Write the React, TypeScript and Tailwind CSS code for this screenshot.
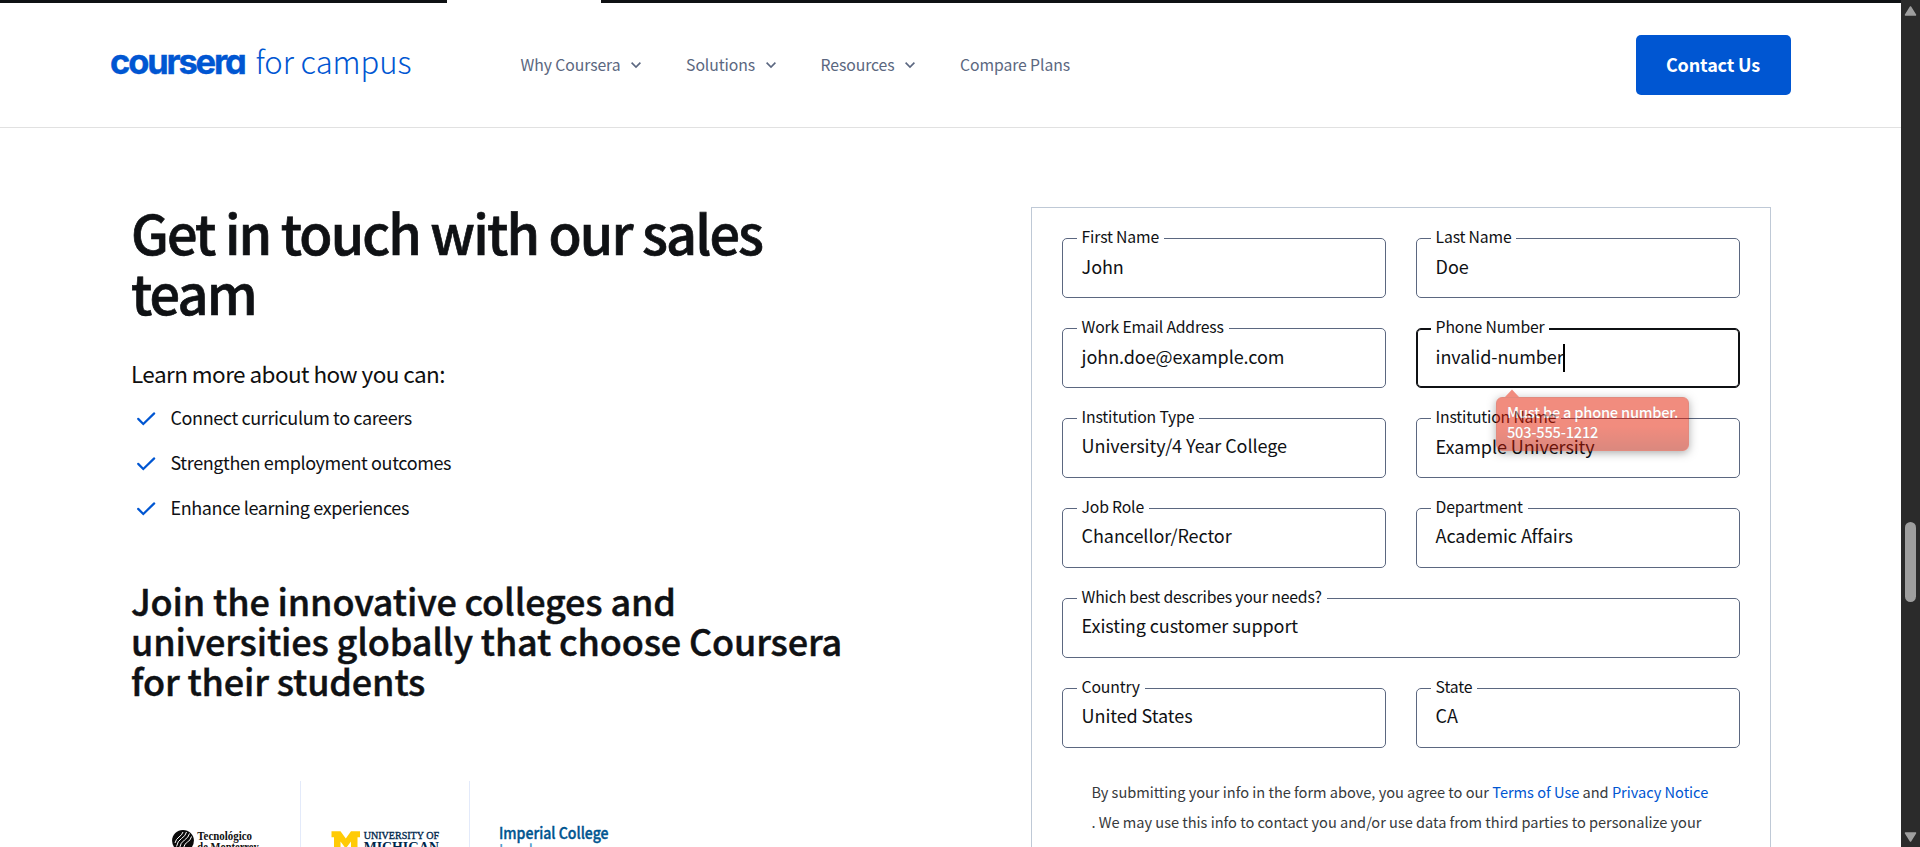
import type { ReactNode } from "react";

type NavItem = { label: string; width: string; menu: boolean };

const navItems: NavItem[] = [
  { label: "Why Coursera", width: "w-[165.5px]", menu: true },
  { label: "Solutions", width: "w-[134.5px]", menu: true },
  { label: "Resources", width: "w-[139.5px]", menu: true },
  { label: "Compare Plans", width: "w-[120px]", menu: false },
];

const benefits = [
  "Connect curriculum to careers",
  "Strengthen employment outcomes",
  "Enhance learning experiences",
];

function Chevron() {
  return (
    <svg className="ml-[9.5px] h-[10px] w-[12px]" viewBox="0 0 12 10" fill="none" stroke="#5b6780" strokeWidth="1.6">
      <path d="M1.6 2.6 L6 7 L10.4 2.6" />
    </svg>
  );
}

function Header() {
  return (
    <header className="flex h-[125px] items-center border-b border-[#e1e1e1] pr-[110px] pl-[110px]">
      <div className="flex w-[410.6px] items-baseline pb-[8px] leading-[40px] text-[#0056d2]">
        <span className="w-[145.5px] font-[Inter] text-[34.5px] font-bold tracking-[-2.15px] [font-feature-settings:'cv11'] [-webkit-text-stroke:0.4px_#0056d2]">
          coursera
        </span>
        <span className="text-[31px] font-light tracking-[-0.05px]">for campus</span>
      </div>
      <nav className="flex pb-px text-[15.75px] leading-[20px] tracking-[-0.09px] text-[#5b6780]">
        {navItems.map((item) => (
          <div key={item.label} className={`flex shrink-0 items-center whitespace-nowrap ${item.width}`}>
            {item.label}
            {item.menu && <Chevron />}
          </div>
        ))}
      </nav>
      <button className="ml-auto flex h-[60px] w-[155px] items-center justify-center rounded-[5px] bg-[#0056d2] pr-px pb-[2px] text-[18px] font-bold tracking-[-0.15px] text-white">
        Contact Us
      </button>
    </header>
  );
}

function Check() {
  return (
    <svg className="mt-[3px] mr-[14.5px] ml-[5px] h-[20px] w-[20px]" viewBox="0 0 20 20" fill="none" stroke="#0056d2" strokeWidth="2.2">
      <path d="M2.2 9.9 L7.3 15 L18.2 4.4" strokeLinecap="round" />
    </svg>
  );
}

function TecLogo() {
  return (
    <svg className="h-[66px] w-[169px]" viewBox="131 781 169 66">
      <circle cx="183" cy="840.8" r="10.900" fill="#0b0b0b" />
      <g fill="none" stroke="#ffffff" strokeWidth="1">
        <path d="M183 832 q-1 3 -4 5 t-4 6" />
        <path d="M186.500 832 q-1 4 -5 6.500 t-5 8" />
        <path d="M189.500 833.500 q-1 4 -5 6.500 t-5 8" />
        <path d="M191.500 836.500 q-1 4 -4 5.500 t-4 6" />
      </g>
      <g fontFamily="'Liberation Serif', serif" fontWeight="700" fontSize="11.5" fill="#111111">
        <text x="197.3" y="840" textLength="54.7" lengthAdjust="spacingAndGlyphs">Tecnológico</text>
        <text x="197.3" y="851" textLength="61.5" lengthAdjust="spacingAndGlyphs">de Monterrey</text>
      </g>
    </svg>
  );
}

function MichiganLogo() {
  return (
    <svg className="h-[66px] w-[168px]" viewBox="301 781 168 66">
      <path
        d="M331.500 831.300 H340.500 L345.800 838.500 L351 831.300 H360 V837.300 H357.500 V849 H351 V841.500 L345.800 848.500 L340.500 841.500 V849 H334 V837.300 H331.500 Z"
        fill="#ffcb05"
      />
      <g fontFamily="'Liberation Serif', serif" fill="#00274c">
        <text x="363.7" y="838.5" fontSize="10.500" fontWeight="400" stroke="#00274c" strokeWidth="0.35" textLength="75.3" lengthAdjust="spacingAndGlyphs">
          UNIVERSITY OF
        </text>
        <text x="363.7" y="852" fontSize="15.500" fontWeight="700" textLength="75.3" lengthAdjust="spacingAndGlyphs">
          MICHIGAN
        </text>
      </g>
    </svg>
  );
}

function ImperialLogo() {
  return (
    <svg className="h-[66px] w-[167px]" viewBox="470 781 167 66">
      <g fontFamily="'Noto Sans CJK SC', sans-serif" fontWeight="500" fontSize="16">
        <text x="499" y="839.3" textLength="109.500" lengthAdjust="spacingAndGlyphs" fill="#005590" stroke="#005590" strokeWidth="0.4">
          Imperial College
        </text>
        <text x="499" y="856" textLength="51" lengthAdjust="spacingAndGlyphs" fill="#4f9bc9">
          London
        </text>
      </g>
    </svg>
  );
}

function Pitch() {
  return (
    <section className="w-[900px] pt-[74px] pl-[131px] text-[#0f1114]">
      <h1 className="w-[720px] text-[54px] leading-[60px] font-medium tracking-[-1.86px] [-webkit-text-stroke:0.7px_#0f1114]">
        Get in touch with our sales
        <br />
        team
      </h1>
      <p className="mt-[36px] text-[22.5px] leading-[30px] tracking-[-0.56px] text-[#0f0f0f]">
        Learn more about how you can:
      </p>
      <ul className="mt-[14px] flex flex-col gap-[15px] text-[18px] leading-[30px] tracking-[-0.39px]">
        {benefits.map((benefit) => (
          <li key={benefit} className="flex items-center">
            <Check />
            {benefit}
          </li>
        ))}
      </ul>
      <h2 className="mt-[58px] text-[36px] leading-[40px] font-medium tracking-[-0.15px] whitespace-nowrap [-webkit-text-stroke:0.45px_#0f1114]">
        Join the innovative colleges and
        <br />
        universities globally that choose Coursera
        <br />
        for their students
      </h2>
      <div className="mt-[81px] flex">
        <div className="border-r border-[#e3eafa]">
          <TecLogo />
        </div>
        <div className="border-r border-[#e3eafa]">
          <MichiganLogo />
        </div>
        <ImperialLogo />
      </div>
    </section>
  );
}

type FieldProps = {
  label: string;
  value: string;
  select?: boolean;
  focused?: boolean;
  wide?: boolean;
  children?: ReactNode;
};

function Field({ label, value, select, focused, wide, children }: FieldProps) {
  const frame = focused ? "border-[#0f1114] ring-1 ring-inset ring-[#0f1114]" : "border-[#5b6780]";
  return (
    <div
      className={`relative h-[60px] rounded-[5px] border pl-[18.6px] text-[#0f1114] ${frame} ${select ? "pt-[14px]" : "pt-[15px]"} ${wide ? "col-span-2" : ""}`}
    >
      <label className="absolute top-[-12px] left-[14px] bg-white pr-[5px] pl-[4.6px] text-[15.75px] leading-[20px] tracking-[-0.18px] whitespace-nowrap">
        {label}
      </label>
      <div className="text-[18px] leading-[24px] tracking-[-0.08px] whitespace-nowrap">{value}</div>
      {children}
    </div>
  );
}

function PhoneError() {
  return (
    <div className="absolute top-[60px] left-[79px] z-10 w-[193px] opacity-50">
      <svg className="ml-[8px] block h-[8px] w-[16px]" viewBox="0 0 16 8">
        <path d="M1 8 L8 0.5 L15 8 Z" fill="#e51b00" />
      </svg>
      <div className="h-[54px] rounded-[6px] border border-[#c51700] bg-linear-to-b from-[#e51b00] from-55% to-[#b81400] pt-[4px] pl-[10px] text-[14.6px] leading-[20px] font-medium tracking-[-0.2px] whitespace-nowrap text-white shadow-[0_2px_9px_rgba(0,0,0,0.65)] [text-shadow:0_0_1px_#901100]">
        Must be a phone number.
        <br />
        503-555-1212
      </div>
    </div>
  );
}

function ContactForm() {
  return (
    <section className="mt-[79px] h-[700px] w-[740px] border border-[#bfc9d6] p-[30px]">
      <div className="grid grid-cols-2 gap-[30px]">
        <Field label="First Name" value="John" />
        <Field label="Last Name" value="Doe" />
        <Field label="Work Email Address" value="john.doe@example.com" />
        <Field label="Phone Number" value="invalid-number" focused>
          <span className="absolute top-[15px] left-[146px] h-[28px] w-[2px] bg-black" />
          <PhoneError />
        </Field>
        <Field label="Institution Type" value="University/4 Year College" select />
        <Field label="Institution Name" value="Example University" />
        <Field label="Job Role" value="Chancellor/Rector" select />
        <Field label="Department" value="Academic Affairs" select />
        <Field label="Which best describes your needs?" value="Existing customer support" select wide />
        <Field label="Country" value="United States" select />
        <Field label="State" value="CA" select />
      </div>
      <p className="pt-[29px] pl-[29.4px] text-[14.6px] leading-[30px] tracking-[-0.02px] whitespace-nowrap text-[#373a3c]">
        By submitting your info in the form above, you agree to our <a className="text-[#0056d2]">Terms of Use</a> and{" "}
        <a className="text-[#0056d2]">Privacy Notice</a>
        <br />
        . We may use this info to contact you and/or use data from third parties to personalize your
      </p>
    </section>
  );
}

function Scrollbar() {
  return (
    <aside className="flex h-[847px] w-[19px] flex-col items-center bg-[#2b2b2b]">
      <svg className="mt-[5px] h-[12px] w-[13px]" viewBox="0 0 13 12">
        <path d="M6.500 2 L11.500 10 H1.500 Z" fill="#9f9f9f" stroke="#9f9f9f" strokeWidth="1.500" strokeLinejoin="round" />
      </svg>
      <div className="mt-[505px] h-[80px] w-[11px] rounded-full bg-[#9f9f9f]" />
      <svg className="mt-auto mb-[4px] h-[12px] w-[13px]" viewBox="0 0 13 12">
        <path d="M6.500 10 L11.500 2 H1.500 Z" fill="#9f9f9f" stroke="#9f9f9f" strokeWidth="1.500" strokeLinejoin="round" />
      </svg>
    </aside>
  );
}

export default function App() {
  return (
    <div className="flex h-[847px] w-[1920px] overflow-hidden bg-white font-['Noto_Sans_CJK_SC',sans-serif]">
      <div className="w-[1901px]">
        <div className="flex h-[3px] justify-between">
          <div className="w-[447px] bg-[#0f1114]" />
          <div className="w-[1300px] bg-[#0f1114]" />
        </div>
        <Header />
        <main className="flex">
          <Pitch />
          <div className="pl-[131px]">
            <ContactForm />
          </div>
        </main>
      </div>
      <Scrollbar />
    </div>
  );
}
